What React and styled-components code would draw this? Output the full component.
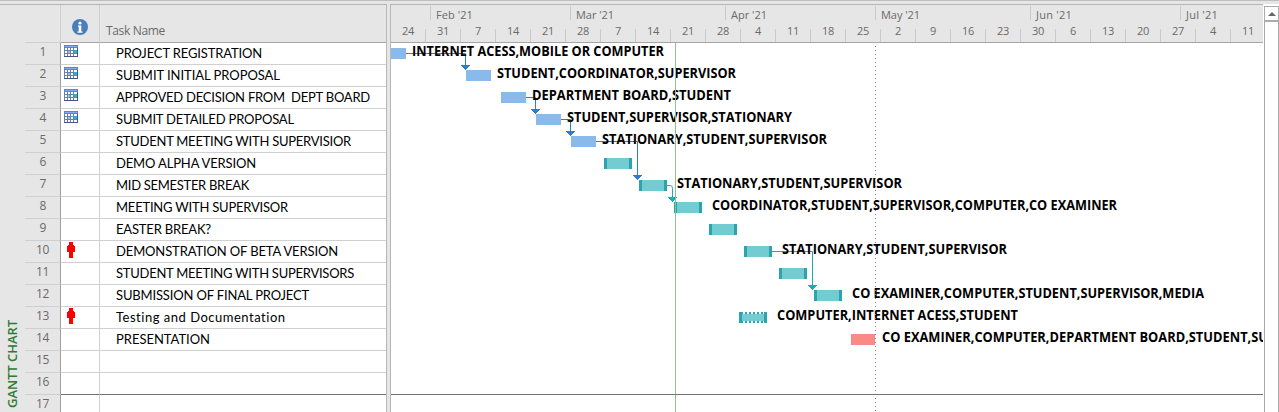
import React, { useLayoutEffect, useRef, useState } from "react";
import styled, { createGlobalStyle } from "styled-components";

const GlobalStyle = createGlobalStyle`
  body { margin: 0; background: #e6e6e6; overflow: hidden; }
  * { box-sizing: border-box; }
`;

const ROW = 22;
const CHART_LEFT = 391;
const segoe = `"Open Sans", "Noto Sans", sans-serif`;
const calibri = `Lato, "Open Sans", sans-serif`;

const tasks = [
  { name: "PROJECT REGISTRATION", w: 146, mark: "calendar" },
  { name: "SUBMIT INITIAL PROPOSAL", w: 164, mark: "calendar" },
  { name: "APPROVED DECISION FROM  DEPT BOARD", w: 254, mark: "calendar" },
  { name: "SUBMIT DETAILED PROPOSAL", w: 178, mark: "calendar" },
  { name: "STUDENT MEETING WITH SUPERVISIOR", w: 235 },
  { name: "DEMO ALPHA VERSION", w: 140 },
  { name: "MID SEMESTER BREAK", w: 133 },
  { name: "MEETING WITH SUPERVISOR", w: 172 },
  { name: "EASTER BREAK?", w: 95 },
  { name: "DEMONSTRATION OF BETA VERSION", w: 222, mark: "person" },
  { name: "STUDENT MEETING WITH SUPERVISORS", w: 238 },
  { name: "SUBMISSION OF FINAL PROJECT", w: 193 },
  { name: "Testing and Documentation", w: 170, mark: "person" },
  { name: "PRESENTATION", w: 94 },
  {},
  {},
  {},
];

const bars = [
  { row: 1, x: 391, w: 15, kind: "auto" },
  { row: 2, x: 466, w: 25, kind: "auto" },
  { row: 3, x: 501, w: 25, kind: "auto" },
  { row: 4, x: 536, w: 25, kind: "auto" },
  { row: 5, x: 571, w: 25, kind: "auto" },
  { row: 6, x: 604, w: 28, kind: "manual" },
  { row: 7, x: 639, w: 28, kind: "manual" },
  { row: 8, x: 674, w: 28, kind: "manual" },
  { row: 9, x: 709, w: 28, kind: "manual" },
  { row: 10, x: 744, w: 28, kind: "manual" },
  { row: 11, x: 779, w: 28, kind: "manual" },
  { row: 12, x: 814, w: 28, kind: "manual" },
  { row: 13, x: 739, w: 28, kind: "warning" },
  { row: 14, x: 851, w: 24, kind: "critical" },
];

const labels = [
  { row: 1, x: 412, end: 664, text: "INTERNET ACESS,MOBILE OR COMPUTER" },
  { row: 2, x: 497, end: 736, text: "STUDENT,COORDINATOR,SUPERVISOR" },
  { row: 3, x: 532, end: 731, text: "DEPARTMENT BOARD,STUDENT" },
  { row: 4, x: 567, end: 792, text: "STUDENT,SUPERVISOR,STATIONARY" },
  { row: 5, x: 602, end: 827, text: "STATIONARY,STUDENT,SUPERVISOR" },
  { row: 7, x: 677, end: 902, text: "STATIONARY,STUDENT,SUPERVISOR" },
  { row: 8, x: 712, end: 1117, text: "COORDINATOR,STUDENT,SUPERVISOR,COMPUTER,CO EXAMINER" },
  { row: 10, x: 782, end: 1007, text: "STATIONARY,STUDENT,SUPERVISOR" },
  { row: 12, x: 852, end: 1204, text: "CO EXAMINER,COMPUTER,STUDENT,SUPERVISOR,MEDIA" },
  { row: 13, x: 777, end: 1018, text: "COMPUTER,INTERNET ACESS,STUDENT" },
  { row: 14, x: 882, end: 1268, text: "CO EXAMINER,COMPUTER,DEPARTMENT BOARD,STUDENT,SU" },
];

const BLUE = "#2b7cd3";
const TEAL = "#1eabb5";
const links = [
  { row: 1, from: 406, to: 465, rows: 1, color: BLUE },
  { row: 3, from: 526, to: 535, rows: 1, color: BLUE },
  { row: 4, from: 561, to: 570, rows: 1, color: BLUE },
  { row: 5, from: 596, to: 637, rows: 2, color: BLUE },
  { row: 7, from: 667, to: 672, rows: 1, color: TEAL, curved: true },
  { row: 10, from: 772, to: 812, rows: 2, color: TEAL },
];

const months = [
  { label: "", w: 39 },
  { label: "Feb '21", w: 140, fit: 37 },
  { label: "Mar '21", w: 155, fit: 38 },
  { label: "Apr '21", w: 150, fit: 36 },
  { label: "May '21", w: 155, fit: 39 },
  { label: "Jun '21", w: 150, fit: 36 },
  { label: "Jul '21", w: 83, fit: 32 },
];
const weeks = [24, 31, 7, 14, 21, 28, 7, 14, 21, 28, 4, 11, 18, 25, 2, 9, 16, 23, 30, 6, 13, 20, 27, 4, 11];

const Window = styled.div`
  width: 1279px; height: 412px; display: flex; flex-direction: column;
  background: #e6e6e6; border-top: 1px solid #bebebe; padding-top: 3px; overflow: hidden;
`;
const Panes = styled.div`display: flex; flex: 1; min-height: 0;`;
const TablePane = styled.div`
  width: 387px; display: flex; border-top: 1px solid #b4b4b4; border-right: 1px solid #b8b8b8;
`;
const ViewName = styled.div`
  width: 25px; display: flex; flex-direction: column; justify-content: flex-end; align-items: center;
  padding: 0 1px 4px 0; color: #2e7a34; font: 600 13px/20px ${segoe};
`;
const Table = styled.div`flex: 1; display: flex; flex-direction: column;`;
const HeadRow = styled.div`display: flex; height: 38px; flex: none;`;
const HeadId = styled.div`width: 36px; border-right: 1px solid #cfcfcf; border-bottom: 1px solid #cfcfcf;`;
const HeadInfo = styled.div`
  width: 39px; border-right: 1px solid #cfcfcf; border-bottom: 1px solid #a6a6a6;
  display: flex; justify-content: center; padding: 14px 0 0 0;
`;
const HeadName = styled.div`
  flex: 1; border-bottom: 1px solid #a6a6a6; padding: 17px 0 0 6px;
  color: #6a6a6a; font: 400 12px/18px ${segoe};
`;
const Row = styled.div`display: flex; height: ${ROW}px; flex: none;`;
const IdCell = styled.div`
  width: 36px; border-right: 1px solid #a0a0a0; border-bottom: 1px solid #cfcfcf;
  color: #6a6a6a; font: 400 12px/17px ${segoe}; display: flex; justify-content: center;
`;
const InfoCell = styled.div`
  width: 39px; background: #fff; border-right: 1px solid #d0d0d0;
  border-bottom: 1px solid ${(p) => (p.$last ? "#747474" : "#d0d0d0")};
  padding: 2px 0 0 3px;
`;
const NameCell = styled.div`
  flex: 1; background: #fff; border-bottom: 1px solid ${(p) => (p.$last ? "#747474" : "#d0d0d0")};
  padding-left: 16px; color: #000; font: 400 13px/21px ${calibri}; white-space: pre;
`;
const Splitter = styled.div`width: 3px;`;
const ChartPane = styled.div`
  width: 873px; display: flex; flex-direction: column;
  border-top: 1px solid #b4b4b4; border-left: 1px solid #b8b8b8;
`;
const TimeScale = styled.div`height: 38px; flex: none; border-bottom: 1px solid #a6a6a6; color: #6a6a6a; overflow: hidden;`;
const MonthTier = styled.div`display: flex; padding-top: 1px; height: 24px;`;
const Month = styled.div`
  width: ${(p) => p.$w}px; flex: none; height: 14px; padding-left: 5px;
  border-left: ${(p) => (p.$first ? "0" : "1px solid #cacaca")};
  font: 400 11px/17px ${segoe};
`;
const WeekTier = styled.div`display: flex; height: 13px;`;
const Week = styled.div`
  width: ${(p) => (p.$first ? 34 : 35)}px; flex: none; height: 13px; display: flex; justify-content: center;
  border-left: ${(p) => (p.$first ? "0" : "1px solid #cacaca")};
  font: 400 11px/4px ${segoe};
`;
const ChartBody = styled.svg`display: block; background: #fff; flex: none;`;
const Label = styled.text`font: 700 14px ${segoe}; fill: #000;`;
const ScrollPane = styled.div`
  flex: 1; background: #fff; padding: 2px 0 0 1px; display: flex; flex-direction: column;
`;
const ScrollButton = styled.div`
  height: 15px; border: 1px solid #ababab; display: flex; align-items: center; justify-content: center;
`;
const ScrollThumb = styled.div`flex: 1; border: 1px solid #ababab; border-bottom: 0;`;
const Fitted = styled.span`
  display: inline-block; white-space: pre;
  align-self: ${(p) => (p.$vertical ? "center" : "flex-start")};
  writing-mode: ${(p) => (p.$vertical ? "vertical-rl" : "horizontal-tb")};
  transform: ${(p) => (p.$vertical ? "rotate(180deg)" : "none")};
`;

/* Adjusts tracking so that a text takes up the given length. */
function FitText({ width, vertical, children }) {
  const ref = useRef(null);
  const [spacing, setSpacing] = useState(0);
  useLayoutEffect(() => {
    const box = ref.current.getBoundingClientRect();
    const natural = vertical ? box.height : box.width;
    setSpacing((width - natural) / String(children).length);
  }, []);
  return <Fitted ref={ref} $vertical={vertical} style={{ letterSpacing: `${spacing}px` }}>{children}</Fitted>;
}

function InfoIcon() {
  return (
    <svg width="16" height="16" viewBox="0 0 16 16">
      <circle cx="8" cy="8" r="8" fill="#4a7ebb" />
      <circle cx="8" cy="4" r="1.6" fill="#fff" />
      <path d="M6 6.500h3.300v6H10.500v1.200h-5v-1.200H6.700V7.700H6z" fill="#fff" />
    </svg>
  );
}

function CalendarIcon() {
  return (
    <svg width="14" height="12" viewBox="0 0 14 12" shapeRendering="crispEdges" style={{ display: "block" }}>
      <rect width="14" height="12" fill="#6a82a8" />
      <rect width="14" height="3" fill="#5b82dc" />
      <rect x="1" y="1" width="12" height="1" fill="#86a8f4" />
      {[3, 6, 9].map((y) =>
        [1, 4, 7, 10].map((x) => (
          <rect key={`${x}-${y}`} x={x} y={y} width={x === 10 ? 3 : 2} height="2" fill="#fff" />
        ))
      )}
      <rect x="4" y="6" width="2" height="2" fill="#b4bccb" />
      <rect x="10" y="5" width="3" height="3" fill="#1fb4e8" />
      <path d="M0 11h14v1H0zM13 3h1v9h-1z" fill="#3f5a86" />
    </svg>
  );
}

function PersonIcon() {
  return (
    <svg width="8" height="16" viewBox="0 0 8 16" shapeRendering="crispEdges" style={{ display: "block", marginLeft: 3, marginTop: -1 }}>
      <rect x="2" y="0" width="4" height="3" fill="#f00" />
      <rect x="3" y="3" width="2" height="1" fill="#f00" />
      <rect x="1" y="3" width="6" height="1" fill="#f00" />
      <rect x="0" y="4" width="8" height="6" fill="#f00" />
      <rect x="2" y="10" width="4" height="6" fill="#f00" />
    </svg>
  );
}

function Bar({ row, x, w, kind }) {
  const y = 5 + (row - 1) * ROW;
  const left = x - CHART_LEFT;
  if (kind === "auto" || kind === "critical") {
    return <rect x={left} y={y} width={w} height="11" fill={kind === "auto" ? "#8ab9eb" : "#f98a86"} />;
  }
  if (kind === "warning") {
    return (
      <g>
        <rect x={left} y={y} width={w} height="11" fill="#2da3ae" />
        <rect x={left + 3} y={y + 2} width={w - 6} height="7" fill="#74ccd3" />
        {[4, 8, 12, 16, 20, 24].map((d) => (
          <g key={d} fill="#fff">
            <rect x={left + d} y={y} width={d === 24 ? 1 : 2} height="2" />
            <rect x={left + d} y={y + 9} width={d === 24 ? 1 : 2} height="2" />
          </g>
        ))}
      </g>
    );
  }
  return (
    <g>
      <rect x={left} y={y} width={w} height="11" fill="#74ccd3" />
      <rect x={left} y={y} width="3" height="11" fill="#2da3ae" />
      <rect x={left + w - 3} y={y} width="3" height="11" fill="#2da3ae" />
    </g>
  );
}

function Link({ row, from, to, rows, color, curved }) {
  const y = 10.5 + (row - 1) * ROW;
  const x = to - CHART_LEFT + 0.5;
  const tip = y - 10.5 + rows * ROW + 5;
  const start = from - CHART_LEFT;
  const d = curved ? `M${start} ${y}H${x - 2}Q${x} ${y} ${x} ${y + 3}V${tip - 5}` : `M${start} ${y}H${x}V${tip - 5}`;
  return (
    <g>
      <path d={d} fill="none" stroke={color} />
      {[9, 7, 5, 3, 1].map((w, i) => (
        <rect key={w} x={x - w / 2} y={tip - 5 + i} width={w} height="1" fill={color} />
      ))}
    </g>
  );
}

export default function App() {
  return (
    <Window>
      <GlobalStyle />
      <Panes>
        <TablePane>
          <ViewName><FitText width={88} vertical>GANTT CHART</FitText></ViewName>
          <Table>
            <HeadRow>
              <HeadId />
              <HeadInfo><InfoIcon /></HeadInfo>
              <HeadName><FitText width={59}>Task Name</FitText></HeadName>
            </HeadRow>
            {tasks.map((t, i) => (
              <Row key={i}>
                <IdCell><FitText width={i < 9 ? 6 : 13}>{i + 1}</FitText></IdCell>
                <InfoCell $last={i === 15}>
                  {t.mark === "calendar" && <CalendarIcon />}
                  {t.mark === "person" && <PersonIcon />}
                </InfoCell>
                <NameCell $last={i === 15}>{t.name && <FitText width={t.w}>{t.name}</FitText>}</NameCell>
              </Row>
            ))}
          </Table>
        </TablePane>
        <Splitter />
        <ChartPane>
          <TimeScale>
            <MonthTier>
              {months.map((m, i) => (
                <Month key={i} $w={m.w} $first={i === 0}>{m.label && <FitText width={m.fit}>{m.label}</FitText>}</Month>
              ))}
            </MonthTier>
            <WeekTier>
              {weeks.map((d, i) => (
                <Week key={i} $first={i === 0}><FitText width={d < 10 ? 6 : 12}>{d}</FitText></Week>
              ))}
            </WeekTier>
          </TimeScale>
          <ChartBody width="872" height="369" viewBox="0 0 872 369">
            <g shapeRendering="crispEdges">
              {bars.map((b) => <Bar key={b.row} {...b} />)}
            </g>
            {links.map((l) => <Link key={l.row} {...l} />)}
            {labels.map((l) => (
              <Label key={l.row} x={l.x - CHART_LEFT} y={13 + (l.row - 1) * ROW} textLength={l.end - l.x} lengthAdjust="spacingAndGlyphs">
                {l.text}
              </Label>
            ))}
            <path d="M284.500 0V369" stroke="#8fc08f" />
            <path d="M484.500 3V369" stroke="#808080" strokeDasharray="1 3" />
            <path d="M0 351.500H872" stroke="#747474" />
          </ChartBody>
        </ChartPane>
        <ScrollPane>
          <ScrollButton>
            <svg width="8" height="4" viewBox="0 0 8 4"><path d="M4 0L8 4H0z" fill="#666" /></svg>
          </ScrollButton>
          <ScrollThumb />
        </ScrollPane>
      </Panes>
    </Window>
  );
}
